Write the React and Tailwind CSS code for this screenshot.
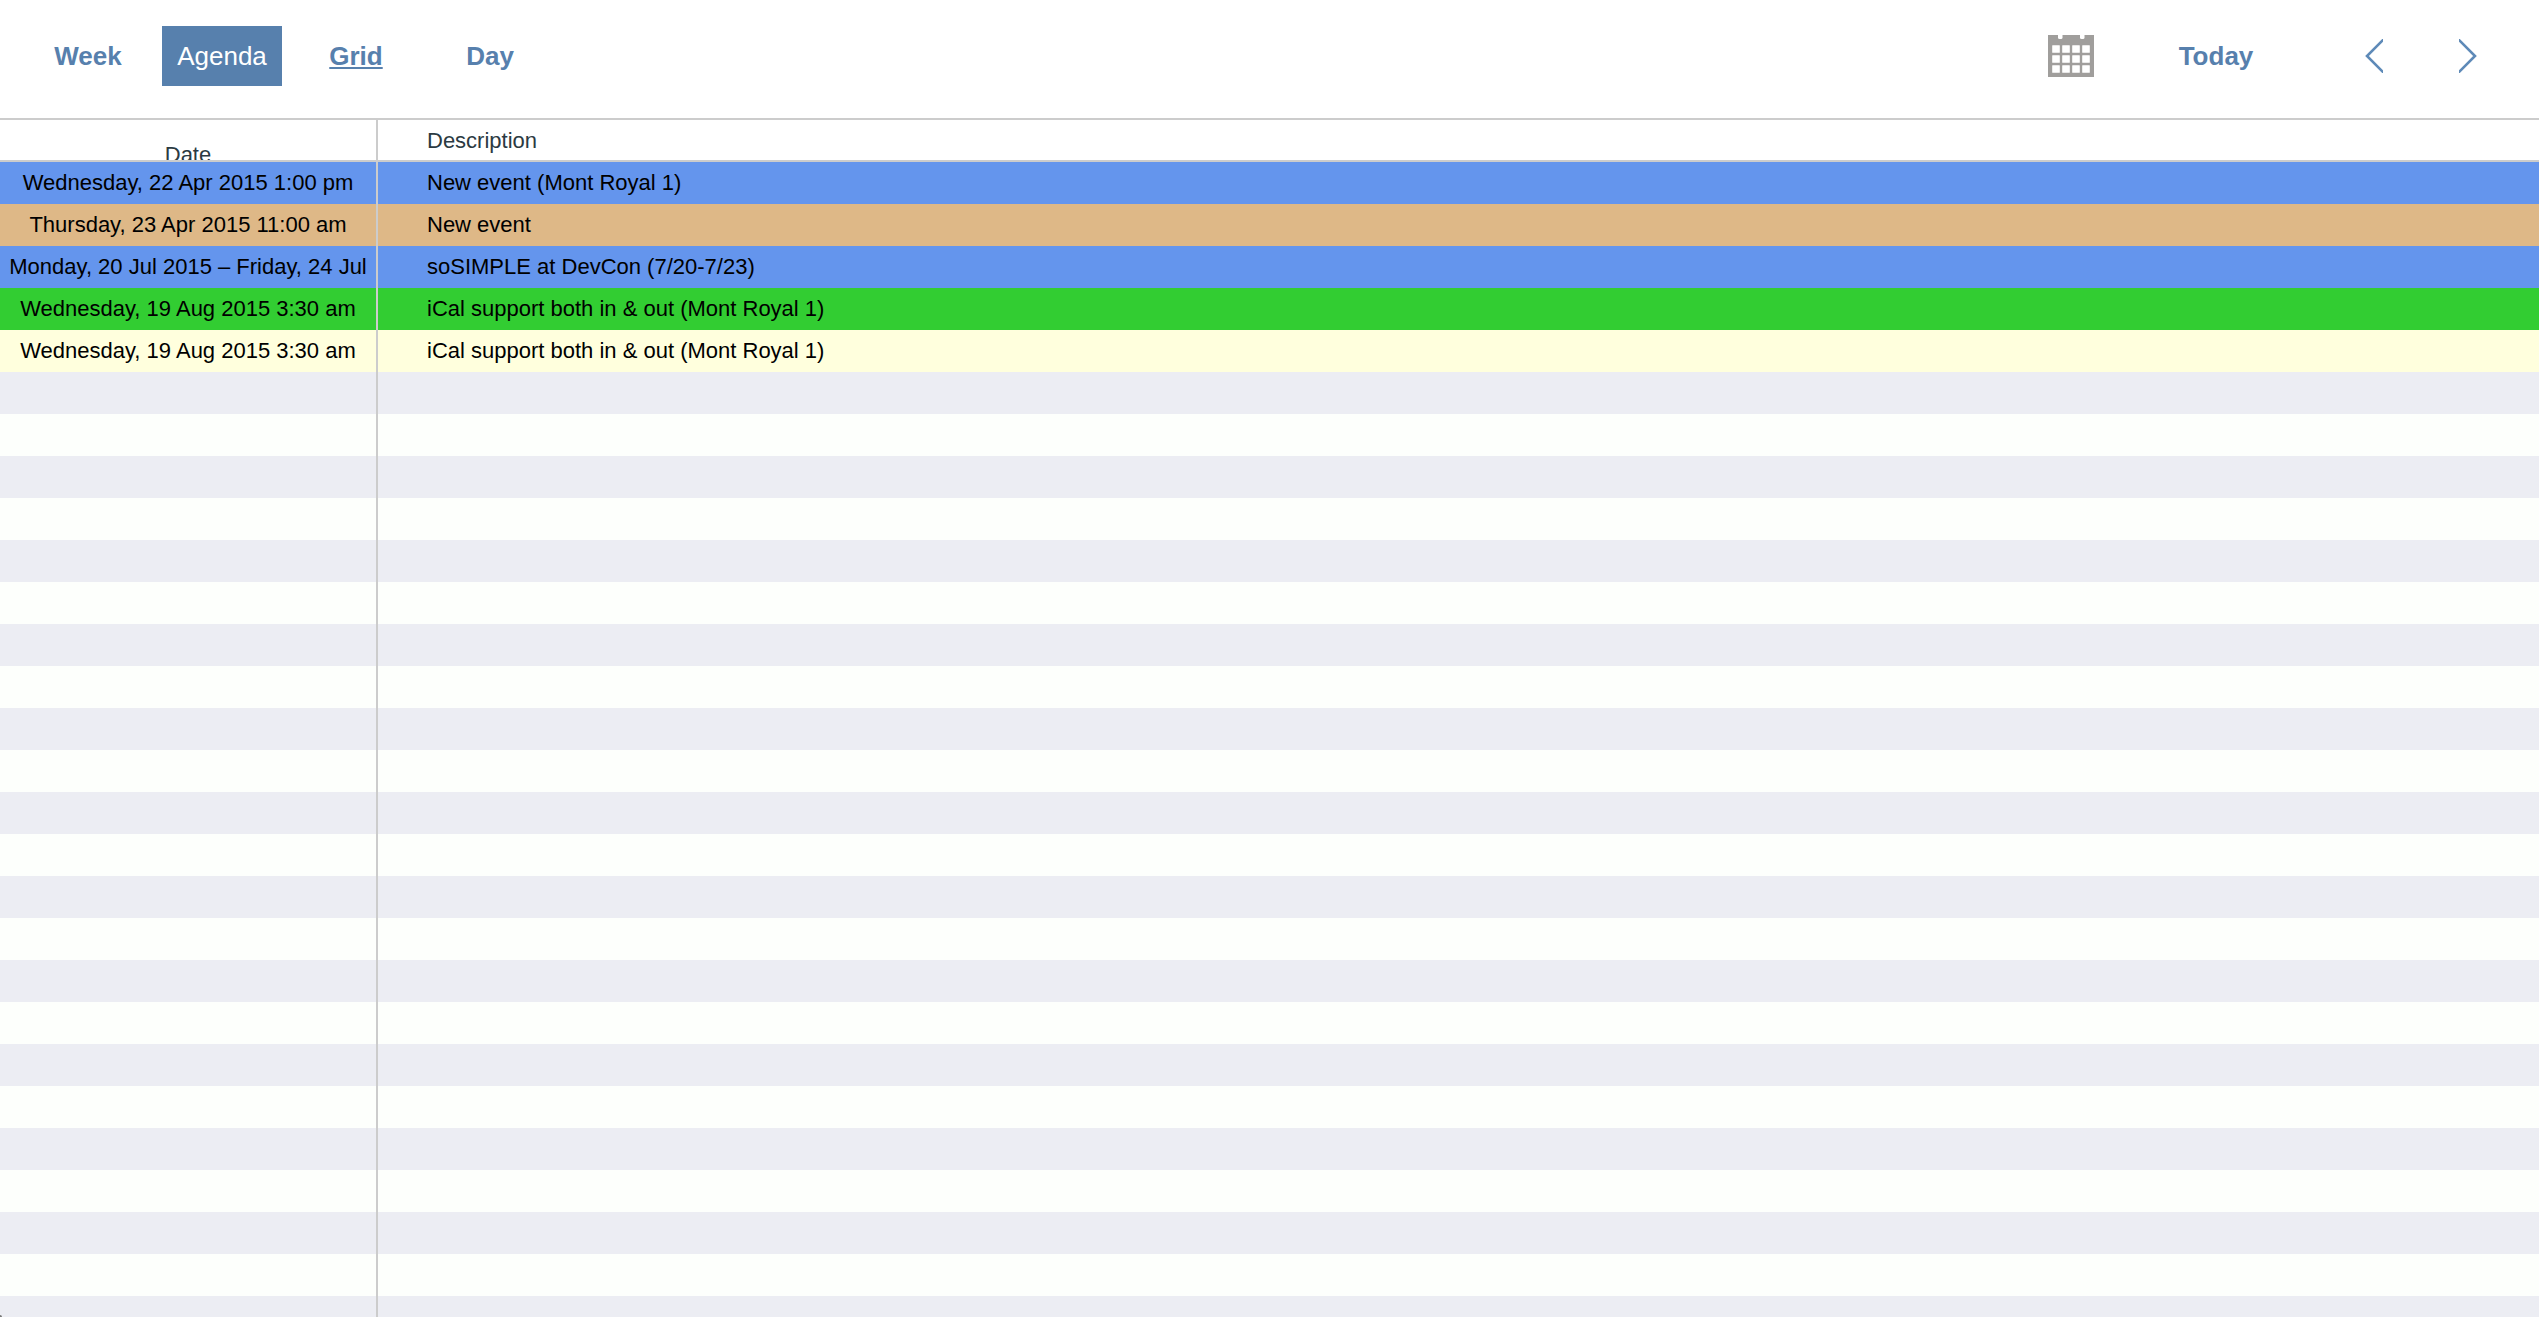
import React from 'react';

const events = [
  { date: 'Wednesday, 22 Apr 2015 1:00 pm', description: 'New event (Mont Royal 1)', color: 'bg-[#6495ed]' },
  { date: 'Thursday, 23 Apr 2015 11:00 am', description: 'New event', color: 'bg-[#deb887]' },
  { date: 'Monday, 20 Jul 2015 – Friday, 24 Jul', description: 'soSIMPLE at DevCon (7/20-7/23)', color: 'bg-[#6495ed]' },
  { date: 'Wednesday, 19 Aug 2015 3:30 am', description: 'iCal support both in & out (Mont Royal 1)', color: 'bg-[#32cd32]' },
  { date: 'Wednesday, 19 Aug 2015 3:30 am', description: 'iCal support both in & out (Mont Royal 1)', color: 'bg-[#ffffdd]' },
];

const emptyRows = Array.from({ length: 23 }, (_, i) => i);

const App = () => {
  return (
    <div className="h-screen overflow-hidden bg-white font-['Liberation_Sans',Arial,sans-serif]">
      <Toolbar />
      <table className="w-full table-fixed border-separate border-spacing-0 text-[22px] leading-[42px] text-black">
        <colgroup>
          <col className="w-[378px]" />
          <col />
        </colgroup>
        <thead className="text-[#2b3a42]">
          <tr>
            <th className="border-y-2 border-r-2 border-[#cccccc] p-0 font-normal">
              {/* The label sits low and is cut off by the first row */}
              <div className="h-10 overflow-hidden pt-3.5">Date</div>
            </th>
            <th className="border-y-2 border-[#cccccc] py-0 pr-0 pl-[49px] text-left font-normal">
              <div className="h-10">Description</div>
            </th>
          </tr>
        </thead>
        <tbody>
          {events.map((event, i) => (
            <Row key={i} {...event} />
          ))}
          {emptyRows.map((i) => (
            <Row key={i} color={i % 2 === 0 ? 'bg-[#ecedf3]' : 'bg-[#fdfffc]'} />
          ))}
        </tbody>
      </table>
      {/* Window corner */}
      <div className="fixed bottom-0 left-0 size-0.5 rounded-tr-full bg-[#777777]" />
    </div>
  );
};

const Toolbar = () => (
  <header className="flex h-[118px] items-start justify-between pt-[26px] text-[26px] text-[#5780ad]">
    {/* Views */}
    <nav className="flex gap-3.5 pl-7">
      <ViewButton text="Week" />
      <ViewButton text="Agenda" active />
      <ViewButton text="Grid" underline />
      <ViewButton text="Day" />
    </nav>

    {/* Date navigation */}
    <div className="flex items-center pr-6">
      <button type="button" aria-label="Pick a date" className="flex h-[60px] w-[94px] items-center justify-center">
        <CalendarIcon />
      </button>
      <button type="button" className="mr-[51px] ml-[38px] h-[60px] w-[120px] font-bold">
        Today
      </button>
      <button type="button" aria-label="Previous" className="flex h-[60px] w-[94px] items-center justify-center">
        <Chevron d="M19 0 L2 17 L19 34" />
      </button>
      <button type="button" aria-label="Next" className="flex h-[60px] w-[94px] items-center justify-center">
        <Chevron d="M-1 0 L16 17 L-1 34" />
      </button>
    </div>
  </header>
);

const ViewButton = ({ text, active, underline }) => (
  <button
    type="button"
    className={`h-[60px] w-[120px] ${active ? 'bg-[#5780ad] text-white' : 'font-bold'} ${
      underline ? 'underline decoration-2 underline-offset-2' : ''
    }`}
  >
    {text}
  </button>
);

const Row = ({ date, description, color }) => (
  <tr className={`h-[42px] ${color}`}>
    <td className="border-r-2 border-[#cccccc] p-0 text-center whitespace-nowrap">{date}</td>
    <td className="py-0 pr-0 pl-[49px]">{description}</td>
  </tr>
);

const Chevron = ({ d }) => (
  <svg width="18" height="34" viewBox="0 0 18 34" fill="none" stroke="#5e8ab8" strokeWidth="2.6">
    <path d={d} />
  </svg>
);

const CalendarIcon = () => (
  <svg width="46" height="42" viewBox="0 0 46 42">
    <rect width="46" height="42" fill="#a09e9c" />
    <rect x="10" y="-2" width="4.5" height="6" rx="1.5" fill="#ffffff" />
    <rect x="32" y="-2" width="4.5" height="6" rx="1.5" fill="#ffffff" />
    {[10, 20, 30].map((y) =>
      [4, 14, 24, 34].map((x) => (
        <rect key={`${x}-${y}`} x={x + 0.2} y={y + 0.2} width="7.6" height="7.6" rx="0.5" fill="#ffffff" />
      ))
    )}
  </svg>
);

export default App;
